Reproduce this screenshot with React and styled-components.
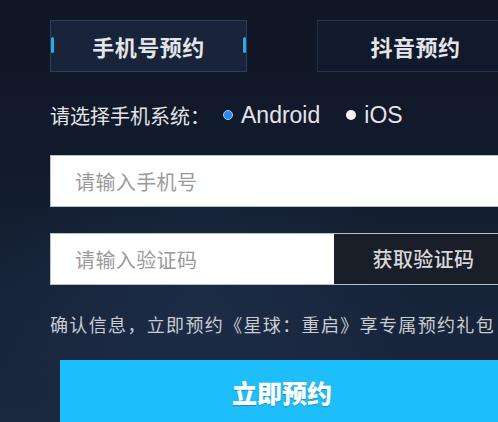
import React, { useState } from "react";
import styled, { createGlobalStyle } from "styled-components";

const Global = createGlobalStyle`
  html, body { margin: 0; padding: 0; }
  body {
    width: 498px;
    height: 422px;
    overflow: hidden;
    background: #111a2b;
    font-family: "Noto Sans CJK SC", "Noto Sans", sans-serif;
  }
  *, *::before, *::after { box-sizing: border-box; }
`;

const Page = styled.div`
  width: 498px;
  height: 422px;
  overflow: hidden;
  background:
    radial-gradient(ellipse 320px 200px at 200px 300px, rgba(40, 62, 100, 0.35), transparent 70%),
    linear-gradient(180deg, #0f1625 0%, #121b2d 40%, #172439 75%, #1a283f 100%);
`;

const Panel = styled.div`
  width: 514px;
  padding-left: 50px;
  display: flex;
  flex-direction: column;
`;

const Tabs = styled.div`
  margin-top: 20px;
  display: flex;
  gap: 70px;
`;

const Tab = styled.div`
  position: relative;
  flex: 0 0 197px;
  height: 52px;
  display: flex;
  align-items: center;
  justify-content: center;
  font-size: 22px;
  font-weight: 700;
  color: #e3e5e9;
  letter-spacing: 0.5px;
  background: ${(p) => (p.$active ? "#19243a" : "#111a2c")};
  border: 1px solid ${(p) => (p.$active ? "#2b3f58" : "#223449")};
`;

const Mark = styled.span`
  position: absolute;
  top: 16px;
  width: 3px;
  height: 16px;
  border-radius: 2px;
  background: #2fa8e4;
  ${(p) => (p.$side === "left" ? "left: 0;" : "right: 0;")}
`;

const RadioRow = styled.div`
  margin-top: 23px;
  height: 40px;
  display: flex;
  align-items: center;
  color: #e2e4e8;
`;

const Label = styled.span`
  font-size: 20px;
  margin-right: 13px;
`;

const Option = styled.label`
  display: flex;
  align-items: center;
  gap: 8px;
  margin-right: 26px;
  font-family: "Liberation Sans", Arial, sans-serif;
  font-size: 23px;
  cursor: pointer;
`;

const Dot = styled.span`
  width: 10px;
  height: 10px;
  border-radius: 50%;
  background: ${(p) => (p.$on ? "#2f86ee" : "#f4f5f7")};
  border: ${(p) => (p.$on ? "1.5px solid #9fcbff" : "none")};
`;

const Field = styled.div`
  margin-top: ${(p) => p.$mt}px;
  width: 464px;
  height: 52px;
  display: flex;
  border: 1px solid #b8c0cc;
  background: #fff;
`;

const Input = styled.input`
  flex: 1;
  min-width: 0;
  height: 100%;
  border: none;
  outline: none;
  padding: 0 0 0 24px;
  font-family: "Noto Sans CJK SC", "Noto Sans", sans-serif;
  font-size: 20px;
  letter-spacing: 0.4px;
  color: #333;
  background: #fff;
  &::placeholder { color: #9a9a9a; }
`;

const CodeInput = styled(Input)`
  flex: 0 0 283px;
`;

const CodeButton = styled.button`
  flex: 1;
  border: none;
  background: #191e28;
  color: #d6d8dc;
  font-family: "Noto Sans CJK SC", "Noto Sans", sans-serif;
  font-size: 20px;
  font-weight: 500;
  letter-spacing: 0.4px;
  padding: 0 0 2px;
  cursor: pointer;
`;

const Notice = styled.p`
  margin: 26px 0 0;
  height: 26px;
  line-height: 26px;
  white-space: nowrap;
  font-size: 18px;
  letter-spacing: 1.35px;
  color: #c9ccd3;
`;

const Submit = styled.button`
  position: relative;
  width: 444px;
  margin: 23px 10px 0;
  height: 70px;
  border: none;
  background: #1ebefb;
  color: #fff;
  font-family: "Noto Sans CJK SC", "Noto Sans", sans-serif;
  font-size: 25px;
  font-weight: 900;
  padding-bottom: 8px;
  text-shadow: 0 1px 1px rgba(0, 60, 110, 0.35);
  cursor: pointer;
`;

const Tip = styled.span`
  position: absolute;
  left: 123px;
  bottom: 0;
  width: 199px;
  height: 5px;
  border-radius: 4px 4px 0 0;
  background: #0f1a2c;
`;

export default function App() {
  const [os, setOs] = useState("android");
  return (
    <Page>
      <Global />
      <Panel>
        <Tabs>
          <Tab $active>
            <Mark $side="left" />
            手机号预约
            <Mark $side="right" />
          </Tab>
          <Tab>抖音预约</Tab>
        </Tabs>
        <RadioRow>
          <Label>请选择手机系统：</Label>
          <Option onClick={() => setOs("android")}>
            <Dot $on={os === "android"} />
            Android
          </Option>
          <Option onClick={() => setOs("ios")}>
            <Dot $on={os === "ios"} />
            iOS
          </Option>
        </RadioRow>
        <Field $mt={20}>
          <Input placeholder="请输入手机号" />
        </Field>
        <Field $mt={26}>
          <CodeInput placeholder="请输入验证码" />
          <CodeButton>获取验证码</CodeButton>
        </Field>
        <Notice>确认信息，立即预约《星球：重启》享专属预约礼包！</Notice>
        <Submit>
          立即预约
          <Tip />
        </Submit>
      </Panel>
    </Page>
  );
}
